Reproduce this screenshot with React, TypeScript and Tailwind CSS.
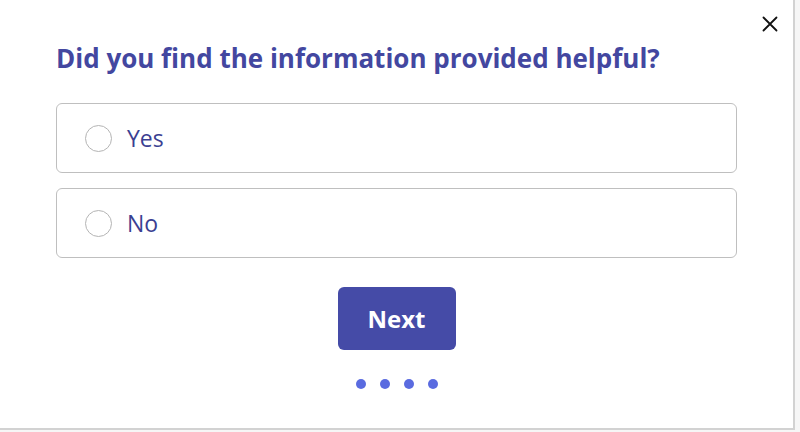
import { useState } from "react";

const OPTIONS = ["Yes", "No"];

export default function App() {
  const [choice, setChoice] = useState<string | null>(null);

  return (
    <div className="h-[432px] w-[800px] overflow-hidden bg-[#f6f6f6] font-['Open_Sans',sans-serif]">
      <div className="relative h-[430px] w-[795px] border-b-2 border-r-2 border-[#d2d2d2] bg-white">
        {/* close */}
        <button className="absolute right-[14px] top-[15px] flex h-[18px] w-[18px] items-center justify-center text-[#111]">
          <svg viewBox="0 0 16 16" className="h-[16px] w-[16px]" fill="none" stroke="currentColor" strokeWidth="1.8" strokeLinecap="round">
            <path d="M1.5 1.5l13 13M14.5 1.5l-13 13" />
          </svg>
        </button>

        <div className="flex flex-col px-[56px] pt-[40px]">
          <h1 className="text-[26px] font-bold leading-[36px] text-[#4347a0]">
            Did you find the information provided helpful?
          </h1>

          <div className="mt-[27px] flex flex-col gap-[15px]">
            {OPTIONS.map((o) => (
              <label
                key={o}
                onClick={() => setChoice(o)}
                className="flex h-[70px] cursor-pointer items-center gap-[15px] rounded-[6px] border-[1.5px] border-[#bfbfbf] pl-[28px]"
              >
                <span className="flex h-[27px] w-[27px] items-center justify-center rounded-full border-[1.5px] border-[#b4b4b4] bg-white">
                  {choice === o && <span className="h-[13px] w-[13px] rounded-full bg-[#4347a0]" />}
                </span>
                <span className="text-[23px] leading-none text-[#3b3f92]">{o}</span>
              </label>
            ))}
          </div>

          <div className="mt-[29px] flex justify-center">
            <button className="h-[63px] w-[118px] rounded-[6px] bg-[#454ba7] text-[24px] font-bold text-white">
              Next
            </button>
          </div>

          <div className="mt-[29px] flex justify-center gap-[14px]">
            {[0, 1, 2, 3].map((i) => (
              <span key={i} className="h-[10px] w-[10px] rounded-full bg-[#5a6be0]" />
            ))}
          </div>
        </div>
      </div>
    </div>
  );
}
